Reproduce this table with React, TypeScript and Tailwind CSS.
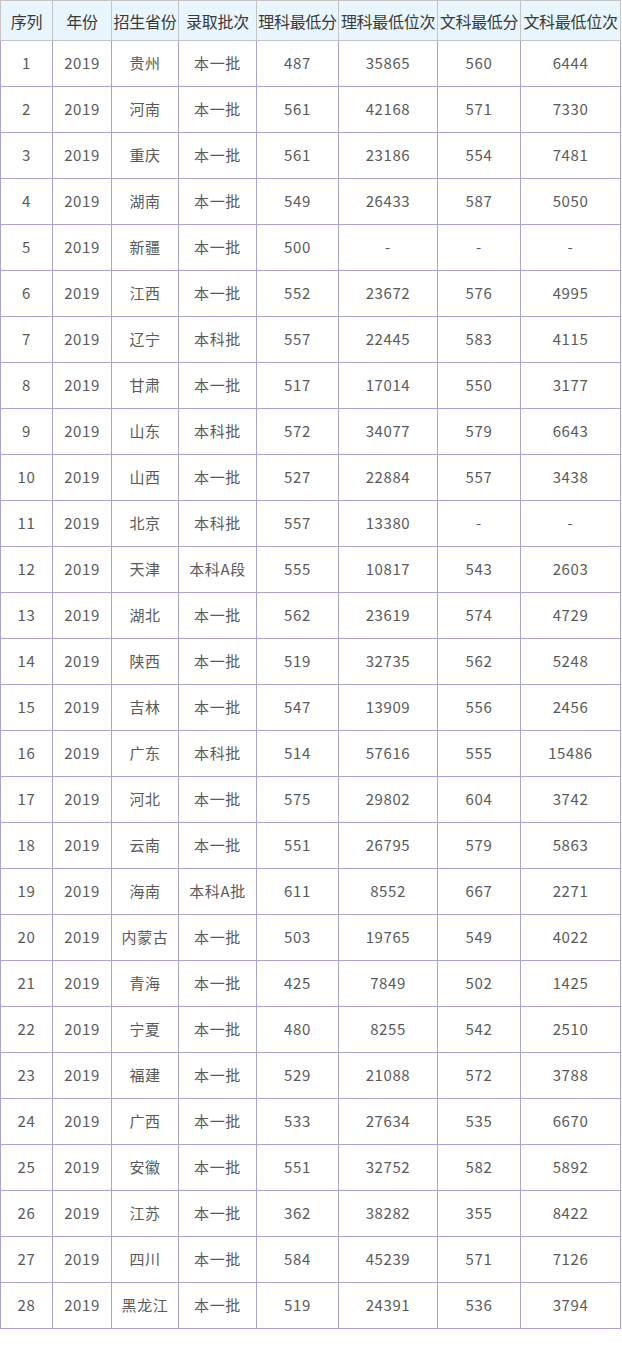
const rows: [string, string, string, string, string, string, string][] = [
  ["1", "贵州", "本一批", "487", "35865", "560", "6444"],
  ["2", "河南", "本一批", "561", "42168", "571", "7330"],
  ["3", "重庆", "本一批", "561", "23186", "554", "7481"],
  ["4", "湖南", "本一批", "549", "26433", "587", "5050"],
  ["5", "新疆", "本一批", "500", "-", "-", "-"],
  ["6", "江西", "本一批", "552", "23672", "576", "4995"],
  ["7", "辽宁", "本科批", "557", "22445", "583", "4115"],
  ["8", "甘肃", "本一批", "517", "17014", "550", "3177"],
  ["9", "山东", "本科批", "572", "34077", "579", "6643"],
  ["10", "山西", "本一批", "527", "22884", "557", "3438"],
  ["11", "北京", "本科批", "557", "13380", "-", "-"],
  ["12", "天津", "本科A段", "555", "10817", "543", "2603"],
  ["13", "湖北", "本一批", "562", "23619", "574", "4729"],
  ["14", "陕西", "本一批", "519", "32735", "562", "5248"],
  ["15", "吉林", "本一批", "547", "13909", "556", "2456"],
  ["16", "广东", "本科批", "514", "57616", "555", "15486"],
  ["17", "河北", "本一批", "575", "29802", "604", "3742"],
  ["18", "云南", "本一批", "551", "26795", "579", "5863"],
  ["19", "海南", "本科A批", "611", "8552", "667", "2271"],
  ["20", "内蒙古", "本一批", "503", "19765", "549", "4022"],
  ["21", "青海", "本一批", "425", "7849", "502", "1425"],
  ["22", "宁夏", "本一批", "480", "8255", "542", "2510"],
  ["23", "福建", "本一批", "529", "21088", "572", "3788"],
  ["24", "广西", "本一批", "533", "27634", "535", "6670"],
  ["25", "安徽", "本一批", "551", "32752", "582", "5892"],
  ["26", "江苏", "本一批", "362", "38282", "355", "8422"],
  ["27", "四川", "本一批", "584", "45239", "571", "7126"],
  ["28", "黑龙江", "本一批", "519", "24391", "536", "3794"],
];

const headers = ["序列", "年份", "招生省份", "录取批次", "理科最低分", "理科最低位次", "文科最低分", "文科最低位次"];
const widths = [52, 59, 67, 78, 82, 99, 83, 100];

export default function App() {
  return (
    <div className="bg-white min-h-[1355px] font-['Noto_Sans_CJK_SC',sans-serif]">
      <table className="table-fixed border-collapse w-[620px]">
        <colgroup>
          {widths.map((w, i) => (
            <col key={i} style={{ width: w }} />
          ))}
        </colgroup>
        <thead>
          <tr className="h-[40px] bg-[#e8f5fd]">
            {headers.map((h) => (
              <th
                key={h}
                className="border border-[#c4c4c4] p-0 text-[16px] font-normal text-[#3a3a3a] whitespace-nowrap tracking-[-0.3px]"
              >
                {h}
              </th>
            ))}
          </tr>
        </thead>
        <tbody>
          {rows.map((r) => (
            <tr key={r[0]} className="h-[46px]">
              <td className="border border-[#aba2d2] text-center text-[15px] text-[#595959] tracking-[0.6px]">{r[0]}</td>
              <td className="border border-[#aba2d2] text-center text-[15px] text-[#595959] tracking-[0.6px]">2019</td>
              {r.slice(1).map((c, i) => (
                <td key={i} className="border border-[#aba2d2] text-center text-[15px] text-[#595959] whitespace-nowrap tracking-[0.6px]">
                  {c}
                </td>
              ))}
            </tr>
          ))}
        </tbody>
      </table>
    </div>
  );
}
